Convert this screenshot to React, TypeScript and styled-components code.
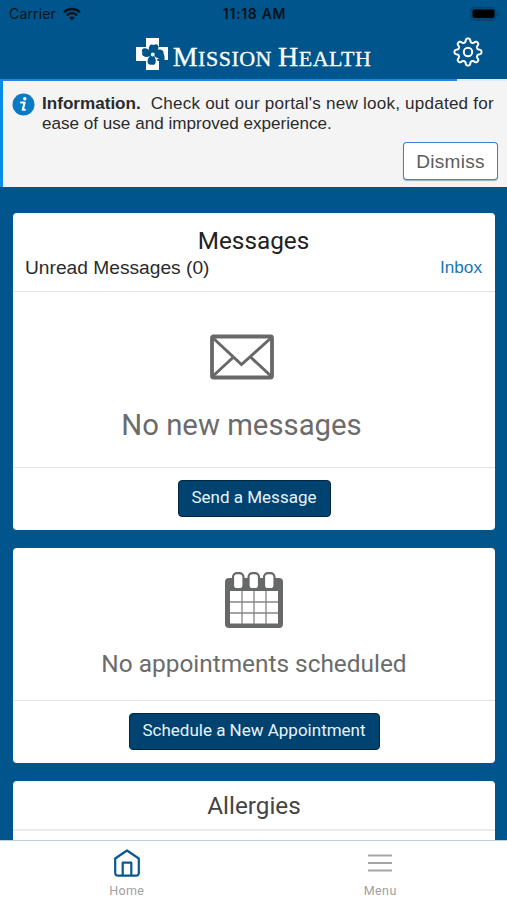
import React from "react";
import styled, { createGlobalStyle } from "styled-components";

const GlobalStyle = createGlobalStyle`
  * { box-sizing: border-box; }
  body { margin: 0; background: #00558c; }
`;

const helvetica = `"Liberation Sans", Arial, sans-serif`;
const roboto = `Roboto, "Liberation Sans", sans-serif`;
const system = `Inter, Roboto, sans-serif`;

const Screen = styled.div`
  display: flex;
  flex-direction: column;
  width: 507px;
  height: 900px;
  overflow: hidden;
  background: #00558c;
  font-family: ${roboto};
`;

const StatusBar = styled.div`
  display: grid;
  grid-template-columns: 1fr auto 1fr;
  align-items: center;
  flex: none;
  height: 28px;
  padding: 0 7px 0 9px;
  font: 400 14px/28px ${system};
  color: #06121c;
`;

const Carrier = styled.div`
  display: flex;
  align-items: center;
  gap: 7px;
  letter-spacing: 0.15px;
`;

const Clock = styled.div`
  font-weight: 600;
  letter-spacing: 0.7px;
`;

const BatterySlot = styled.div`
  display: flex;
  justify-content: flex-end;
`;

const Header = styled.header`
  display: grid;
  grid-template-columns: 40px 1fr 40px;
  align-items: center;
  flex: none;
  height: 51px;
  padding: 0 19px 3px;
`;

const Brand = styled.div`
  grid-column: 2;
  display: flex;
  justify-content: center;
  align-items: center;
  gap: 5px;
  padding-top: 4px;
`;

const BrandName = styled.div`
  font: 400 22px/30px "Liberation Serif", serif;
  color: #fff;
  white-space: pre;
  padding-top: 8px;
  letter-spacing: 0.5px;
  -webkit-text-stroke: 0.3px #fff;
`;

const Cap = styled.span`
  font-size: 28px;
`;

const IconButton = styled.button`
  display: grid;
  place-items: center;
  padding: 0;
  border: 0;
  background: none;
`;

const ProgressTrack = styled.div`
  flex: none;
  height: 2px;
  background: #e3ebf1;
`;

const ProgressValue = styled.div`
  width: 457px;
  height: 2px;
  background: #2c80ea;
`;

const Notice = styled.section`
  display: grid;
  grid-template-columns: 23px 1fr;
  grid-template-rows: 41px 38px;
  row-gap: 8px;
  column-gap: 7px;
  flex: none;
  height: 106px;
  padding: 12px 9px 0;
  border-left: 3px solid #0b8ce3;
  background: #f4f4f4;
`;

const NoticeText = styled.p`
  margin: 0;
  padding-top: 1px;
  font: 400 17.1px/20px ${helvetica};
  color: #2b2b2b;
  white-space: pre;
`;

const NoticeLine = styled.span`
  display: block;
`;

const Loose = styled.span`
  letter-spacing: 0.21px;
`;

const DismissButton = styled.button`
  grid-column: 2;
  justify-self: end;
  width: 95px;
  height: 38px;
  padding: 1px 0 0;
  border: 1px solid #3f80cf;
  border-bottom-color: #5b7fae;
  border-radius: 4px;
  background: #fff;
  box-shadow: 0 1px 1px rgba(40, 80, 130, 0.45);
  font: 400 19px/35px ${helvetica};
  letter-spacing: 0.3px;
  color: #5c5c5c;
`;

const Feed = styled.main`
  display: flex;
  flex-direction: column;
  gap: 18px;
  flex: 1;
  min-height: 0;
  overflow: hidden;
  padding: 26px 12px 0 13px;
`;

const Card = styled.section<{ $height: number }>`
  display: flex;
  flex-direction: column;
  flex: none;
  height: ${(p) => p.$height}px;
  border-radius: 4px;
  background: #fff;
`;

const CardTitle = styled.h2<{ $tone?: string }>`
  margin: 0;
  font: 400 24.3px/30px ${roboto};
  text-align: center;
  color: ${(p) => p.$tone ?? "#222"};
`;

const MessagesHead = styled.div`
  height: 79px;
  padding: 13px 13px 0 12px;
  border-bottom: 1px solid #e3e3e3;
`;

const AllergiesHead = styled.div`
  height: 50px;
  padding-top: 10px;
  border-bottom: 2px solid #ececec;
`;

const Summary = styled.div`
  display: flex;
  justify-content: space-between;
  font: 400 19.2px/24px ${helvetica};
  color: #2b2b2b;
`;

const InboxLink = styled.a`
  font-size: 17.2px;
  line-height: 23px;
  color: #1a75b5;
`;

const EmptyState = styled.div<{ $height: number; $top: number }>`
  display: flex;
  flex-direction: column;
  align-items: center;
  height: ${(p) => p.$height}px;
  padding-top: ${(p) => p.$top}px;
  border-bottom: 1px solid #e3e3e3;
`;

const EmptyText = styled.p<{ $size: number; $gap: number }>`
  margin: ${(p) => p.$gap}px 0 0;
  font: 400 ${(p) => p.$size}px/36px ${roboto};
  color: #6b6b6b;
`;

const MessagesEmpty = styled(EmptyState)`
  padding-right: 25px;
`;

const PrimaryButton = styled.button<{ $width: number }>`
  align-self: center;
  width: ${(p) => p.$width}px;
  height: 37px;
  margin-top: 12px;
  padding: 0 0 2px;
  border: 1px solid #04263f;
  border-radius: 4px;
  background: #004370;
  font: 400 17px/33px ${roboto};
  color: #e9f3fb;
`;

const TabBar = styled.nav`
  display: grid;
  grid-template-columns: 1fr 1fr;
  flex: none;
  height: 60px;
  border-top: 1px solid #b9cfdd;
  background: #fff;
`;

const Tab = styled.a`
  display: flex;
  flex-direction: column;
  align-items: center;
  padding-top: 7px;
`;

const TabIcon = styled.div`
  display: grid;
  place-items: center;
  height: 30px;
`;

const TabLabel = styled.span`
  margin-top: 5px;
  font: 400 12.5px/16px ${roboto};
  letter-spacing: 0.4px;
  color: #a0a0a0;
`;

const WifiIcon = () => (
  <svg width="18" height="14" viewBox="0 0 18 14" fill="none" stroke="#06121c" strokeWidth="2.3">
    <path d="M1 5.3C5.5.9 12.5.9 17 5.3" />
    <path d="M3.9 8.3c2.9-2.8 7.3-2.8 10.2 0" />
    <path d="M6.2 10.6c1.7-1.5 3.9-1.5 5.6 0L9 13.6z" fill="#06121c" stroke="none" />
  </svg>
);

const BatteryIcon = () => (
  <svg width="30" height="14" viewBox="0 0 30 14">
    <rect x="0.5" y="0.5" width="25.5" height="13" rx="4" fill="#004a7a" stroke="#054470" />
    <rect x="2.5" y="2.500" width="22" height="8.5" rx="2" fill="#000" />
    <path d="M27.3 4.6c2 .8 2 4 0 4.8z" fill="#054470" />
  </svg>
);

const LogoMark = () => (
  <svg width="32" height="32" viewBox="0 0 32 32">
    <path d="M10 0h13v9h9v13h-3.5l-1.5-1-4 1v10H10v-9H0V9h10z" fill="#fff" />
    <g fill="#00558c">
      <path d="M16 16c-3-2-4-5-2.500-8 1-2 3-1.800 4.500-1 2-1.700 5 0 4.500 2.700C22 13 19 15 16 16z" />
      <path d="M16 16c-2 3-6 4-8.500 2-1.800-1-1.500-2.500-1-3.500-1.500-2 0-4.500 2.500-4.200 3 .3 5.500 2.700 7 5.700z" />
      <path d="M16 16c3 2 4.500 6 3.500 9-.8 2-2.500 2.300-3.500 1.500-2 1-4.500-.5-4.500-3 0-3 2-5.500 4.500-7.500z" />
      <path d="M16 16c2-3 5-5 8.500-4.500 2.500.5 3.500 2.500 3 4.500 1.700 1.500.5 4-2 4.500-3.500.5-7-1.500-9.500-4.500z" />
      <path d="M21 21.500l5-3 2.500-.5v5h-7z" />
    </g>
    <circle cx="16.800" cy="16.500" r="1.900" fill="#fff" />
    <path d="M26.500 10.500h5V22h-1.700c.8-4-.3-8-3.300-11.500z" fill="#fff" />
  </svg>
);

const gearOutline =
  Array.from({ length: 144 }, (_, i) => {
    const angle = (i / 144) * Math.PI * 2;
    const radius = 11.7 + 1.8 * Math.tanh(2 * Math.cos(8 * angle));
    const x = 15 + radius * Math.cos(angle);
    const y = 15 + radius * Math.sin(angle);
    return `${i ? "L" : "M"}${x.toFixed(2)} ${y.toFixed(2)}`;
  }).join("") + "Z";

const GearIcon = () => (
  <svg width="30" height="30" viewBox="0 0 30 30" fill="none" stroke="#fff" strokeWidth="2" strokeLinejoin="round">
    <path d={gearOutline} />
    <circle cx="15" cy="15" r="4.200" />
  </svg>
);

const InfoIcon = () => (
  <svg width="23" height="23" viewBox="0 0 23 23">
    <circle cx="11.500" cy="11.500" r="11" fill="#087bc4" />
    <circle cx="12.800" cy="5.700" r="1.700" fill="#fff" />
    <path d="M9 9.500h3.600l-1.800 7.300h2" fill="none" stroke="#fff" strokeWidth="2.100" strokeLinejoin="round" strokeLinecap="round" />
  </svg>
);

const EnvelopeIcon = () => (
  <svg width="64" height="46" viewBox="0 0 64 46" fill="none" stroke="#686868">
    <rect x="2" y="2.500" width="60" height="41" rx="1.500" strokeWidth="3.800" />
    <path d="M3 4l28.500 26.500L61 4M3 42l20-18.500M61 42L41 23.500" strokeWidth="3" />
  </svg>
);

const CalendarIcon = () => (
  <svg width="58" height="57" viewBox="0 0 58 57">
    <rect x="0" y="6" width="58" height="50" rx="4" fill="#666968" />
    <path d="M5 19h48v32.500H5z" fill="#fff" />
    <path d="M17 19v33M29 19v33M41 19v33M5 30h48M5 41h48" stroke="#858585" strokeWidth="1.300" />
    {[8, 23.5, 39].map((x) => (
      <rect key={x} x={x} y="1.200" width="10.500" height="16" rx="4" fill="#fff" stroke="#666968" strokeWidth="2.200" />
    ))}
  </svg>
);

const HomeIcon = () => (
  <svg width="26" height="28" viewBox="0 0 26 28" fill="none" stroke="#0b5890" strokeWidth="2.200" strokeLinejoin="round">
    <path d="M1.200 9.500L13 1.500l11.800 8V24a2.700 2.700 0 0 1-2.700 2.700H3.900A2.700 2.700 0 0 1 1.200 24z" />
    <path d="M8.700 26.500V13.700h8.600v12.800" />
  </svg>
);

const MenuIcon = () => (
  <svg width="24" height="18" viewBox="0 0 24 18" stroke="#a6a6a6" strokeWidth="2.200">
    <path d="M0 1.500h24M0 9h24M0 16.500h24" />
  </svg>
);

export default function App() {
  return (
    <>
      <GlobalStyle />
      <Screen>
        <StatusBar>
          <Carrier>
            Carrier
            <WifiIcon />
          </Carrier>
          <Clock>11:18 AM</Clock>
          <BatterySlot>
            <BatteryIcon />
          </BatterySlot>
        </StatusBar>
        <Header>
          <Brand>
            <LogoMark />
            <BrandName>
              <Cap>M</Cap>ISSION <Cap>H</Cap>EALTH
            </BrandName>
          </Brand>
          <IconButton aria-label="Settings">
            <GearIcon />
          </IconButton>
        </Header>
        <ProgressTrack>
          <ProgressValue />
        </ProgressTrack>
        <Notice>
          <InfoIcon />
          <NoticeText>
            <NoticeLine>
              <strong>Information.</strong>
              <Loose>{"  Check out our portal's new look, updated for"}</Loose>
            </NoticeLine>
            <NoticeLine>ease of use and improved experience.</NoticeLine>
          </NoticeText>
          <DismissButton>Dismiss</DismissButton>
        </Notice>
        <Feed>
          <Card $height={317}>
            <MessagesHead>
              <CardTitle>Messages</CardTitle>
              <Summary>
                <span>Unread Messages (0)</span>
                <InboxLink>Inbox</InboxLink>
              </Summary>
            </MessagesHead>
            <MessagesEmpty $height={176} $top={42}>
              <EnvelopeIcon />
              <EmptyText $size={29.3} $gap={27}>
                No new messages
              </EmptyText>
            </MessagesEmpty>
            <PrimaryButton $width={153}>Send a Message</PrimaryButton>
          </Card>
          <Card $height={215}>
            <EmptyState $height={153} $top={24}>
              <CalendarIcon />
              <EmptyText $size={24.4} $gap={17}>
                No appointments scheduled
              </EmptyText>
            </EmptyState>
            <PrimaryButton $width={251}>Schedule a New Appointment</PrimaryButton>
          </Card>
          <Card $height={120}>
            <AllergiesHead>
              <CardTitle $tone="#444">Allergies</CardTitle>
            </AllergiesHead>
          </Card>
        </Feed>
        <TabBar>
          <Tab>
            <TabIcon>
              <HomeIcon />
            </TabIcon>
            <TabLabel>Home</TabLabel>
          </Tab>
          <Tab>
            <TabIcon>
              <MenuIcon />
            </TabIcon>
            <TabLabel>Menu</TabLabel>
          </Tab>
        </TabBar>
      </Screen>
    </>
  );
}
